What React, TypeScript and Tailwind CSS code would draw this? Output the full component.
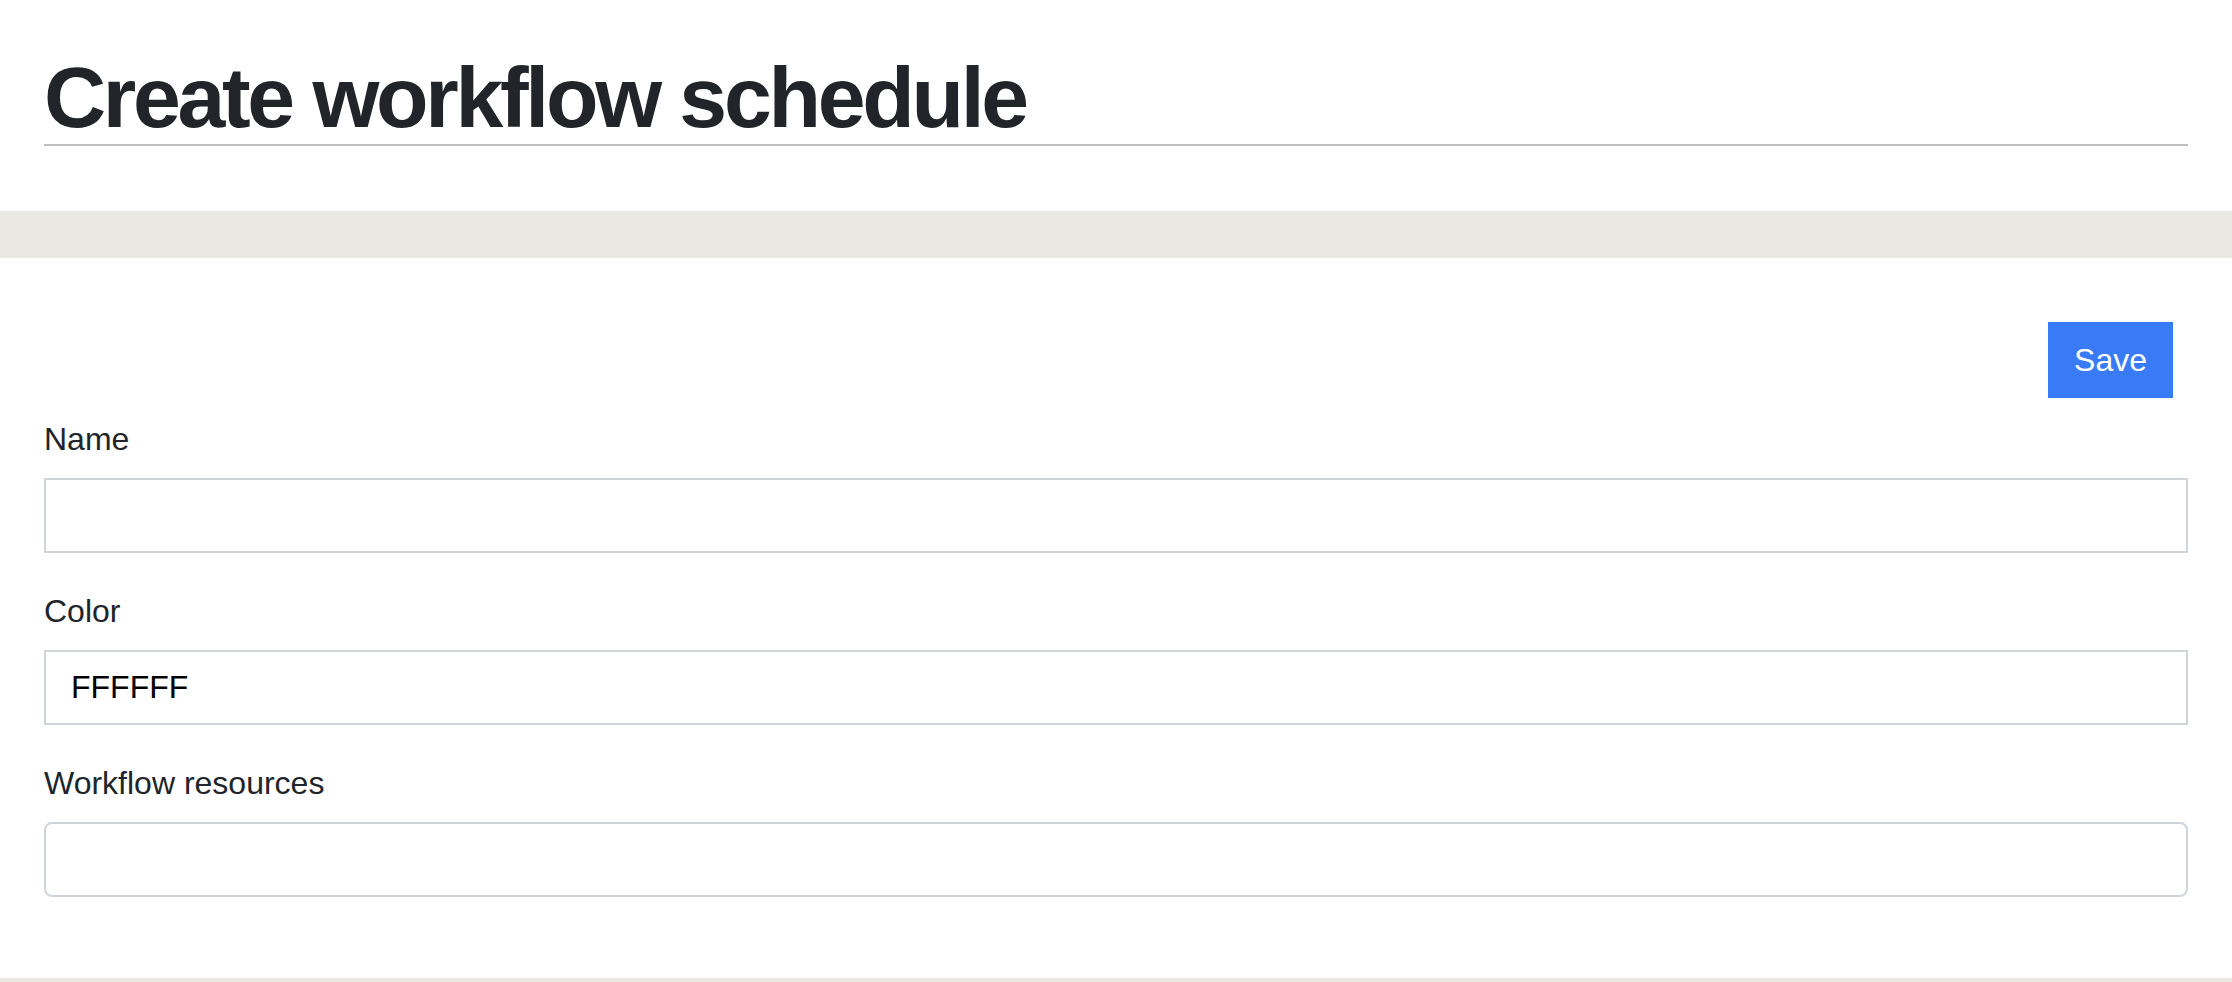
import { useState } from 'react';

const fields = [
  { id: 'name', label: 'Name', initial: '', rounded: false },
  { id: 'color', label: 'Color', initial: 'FFFFFF', rounded: false },
  { id: 'resources', label: 'Workflow resources', initial: '', rounded: true },
];

export default function App() {
  const [values, setValues] = useState<Record<string, string>>(
    Object.fromEntries(fields.map((f) => [f.id, f.initial]))
  );

  return (
    <div
      className="flex h-[982px] w-full flex-col bg-white text-[#212529]"
      style={{ fontFamily: '"Liberation Sans", Helvetica, Arial, sans-serif' }}
    >
      <div className="px-[44px] pt-[51px]">
        <h1 className="border-b-2 border-[#bfbfbf] text-[86px] font-bold leading-[93px] tracking-[-3.3px]">
          Create workflow schedule
        </h1>
      </div>

      <div className="mt-[65px] h-[47px] bg-[#e9e8e3]" />

      <form className="flex-1 px-[44px] pt-[64px]" onSubmit={(e) => e.preventDefault()}>
        <div className="flex justify-end pr-[15px]">
          <button
            type="submit"
            className="h-[76px] w-[125px] bg-[#397bf6] text-[32px] leading-[48px] text-white"
          >
            Save
          </button>
        </div>

        <div className="mt-[17px] flex flex-col gap-[34px]">
          {fields.map((field) => (
            <div key={field.id} className="flex flex-col">
              <label htmlFor={field.id} className="text-[32px] leading-[48px]">
                {field.label}
              </label>
              <input
                id={field.id}
                type="text"
                value={values[field.id]}
                onChange={(e) => setValues({ ...values, [field.id]: e.target.value })}
                className={`mt-[15px] h-[75px] w-full border-2 border-[#ced4da] bg-white px-[25px] text-[32px] text-black outline-none ${
                  field.rounded ? 'rounded-[8px]' : ''
                }`}
              />
            </div>
          ))}
        </div>
      </form>

      <div className="h-[4px] bg-[#e9e8e3]" />
    </div>
  );
}
